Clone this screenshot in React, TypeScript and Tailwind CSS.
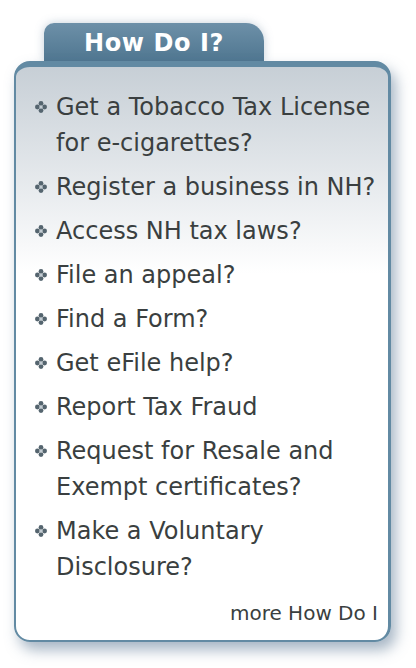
import React from "react";

const items: string[][] = [
  ["Get a Tobacco Tax License", "for e-cigarettes?"],
  ["Register a business in NH?"],
  ["Access NH tax laws?"],
  ["File an appeal?"],
  ["Find a Form?"],
  ["Get eFile help?"],
  ["Report Tax Fraud"],
  ["Request for Resale and", "Exempt certificates?"],
  ["Make a Voluntary", "Disclosure?"],
];

function Bullet() {
  return (
    <svg width="12" height="12" viewBox="0 0 12 12" className="shrink-0 mt-[12px]">
      <circle cx="6" cy="2.4" r="2.4" fill="#55656f" />
      <circle cx="6" cy="9.6" r="2.4" fill="#55656f" />
      <circle cx="2.4" cy="6" r="2.4" fill="#55656f" />
      <circle cx="9.6" cy="6" r="2.4" fill="#55656f" />
      <circle cx="6" cy="6" r="1.5" fill="#c3ccd3" />
    </svg>
  );
}

export default function App() {
  return (
    <div
      className="w-[416px] h-[668px] bg-white pl-[14px] pt-[23px]"
      style={{ fontFamily: '"DejaVu Sans", Verdana, sans-serif' }}
    >
      <div className="ml-[30px] w-[220px] h-[39px] rounded-tl-[10px] rounded-tr-[18px] bg-gradient-to-b from-[#6d90a8] to-[#4f7690] shadow-[0_0_10px_rgba(90,120,150,0.35)] flex items-center pl-[40px]">
        <span className="text-white font-bold text-[24px] leading-none tracking-[0.6px]">How Do I?</span>
      </div>
      <div className="w-[377px] h-[581px] -mt-[1px] rounded-[16px] border-t-[6px] border-l-2 border-r-[3px] border-b-2 border-[#628aa3] bg-gradient-to-b from-[#c7cfd6] via-[#ffffff] via-[36%] to-[#ffffff] shadow-[5px_8px_14px_rgba(80,110,140,0.5)] pt-[22px] pl-[19px] pr-[4px] flex flex-col">
        <ul className="flex flex-col gap-[8px]">
          {items.map((lines, i) => (
            <li key={i} className="flex gap-[9px] text-[24px] leading-[36px] text-[#3a3f40]">
              <Bullet />
              <div>
                {lines.map((l, j) => (
                  <div key={j}>{l}</div>
                ))}
              </div>
            </li>
          ))}
        </ul>
        <div className="text-right pr-[6px] mt-[10px] text-[20px] leading-[36px] text-[#3a3f40]">more How Do I</div>
      </div>
    </div>
  );
}
